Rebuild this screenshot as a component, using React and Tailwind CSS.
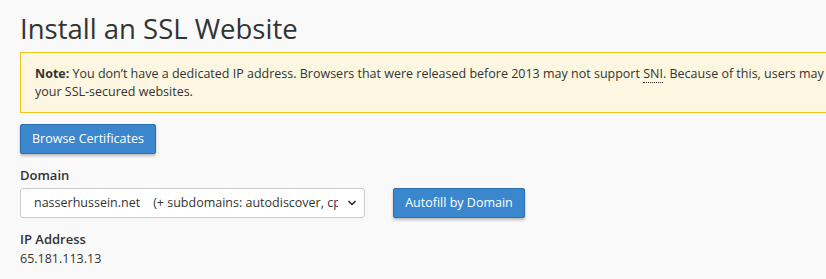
import React from 'react';
import { ChevronDown } from 'lucide-react';

const App = () => {
    return (
        <div className="w-[826px] h-[279px] overflow-hidden bg-[#f9f9f9] text-[#333] px-5 font-['Open_Sans',sans-serif]">
            {/* Title */}
            <h1 className="pt-[12px] text-[27.5px] leading-[34px] text-[#333] whitespace-nowrap">Install an SSL Website</h1>

            {/* Note */}
            <div className="mt-[6px] w-[900px] border border-[#f0c419] bg-[#fdf7e1] px-[14px] pt-[12px] pb-[11px] text-[12.5px] leading-[18px]">
                <p className="whitespace-nowrap">
                    <strong className="font-bold">Note:</strong> You don’t have a dedicated IP address. Browsers that were released before 2013 may not support{' '}
                    <abbr className="no-underline border-b border-dotted border-[#333]">SNI</abbr>. Because of this, users may not be able to access
                </p>
                <p>your SSL-secured websites.</p>
            </div>

            {/* Browse */}
            <button className="mt-[11px] h-[30px] w-[136px] rounded-[2px] border border-[#2c6fae] bg-[#3a87cd] text-[12.5px] text-white shadow-[0_2px_3px_rgba(0,0,0,0.25)]">
                Browse Certificates
            </button>

            {/* Domain */}
            <div className="mt-[12px]">
                <label className="block text-[13px] font-semibold leading-[18px]">Domain</label>
                <div className="mt-[4px] flex items-center gap-[28px]">
                    <div className="relative w-[345px]">
                        <select className="h-[30px] w-full appearance-none rounded-[3px] border border-[#ccc] bg-white pl-[13px] pr-[26px] text-[12.5px] text-[#333]">
                            <option>nasserhussein.net&nbsp;&nbsp;&nbsp;&nbsp;(+ subdomains: autodiscover, cpanel, mail, webmail)</option>
                        </select>
                        <ChevronDown className="pointer-events-none absolute right-[7px] top-1/2 h-[12px] w-[12px] -translate-y-1/2 text-[#333]" strokeWidth={3.5} />
                    </div>
                    <button className="h-[30px] w-[132px] rounded-[2px] border border-[#2c6fae] bg-[#3a87cd] text-[12.5px] text-white shadow-[0_2px_3px_rgba(0,0,0,0.25)]">
                        Autofill by Domain
                    </button>
                </div>
            </div>

            {/* IP */}
            <div className="mt-[12px]">
                <label className="block text-[13px] font-semibold leading-[18px]">IP Address</label>
                <p className="mt-[2px] text-[12.5px] leading-[18px]">65.181.113.13</p>
            </div>
        </div>
    );
};

export default App;
